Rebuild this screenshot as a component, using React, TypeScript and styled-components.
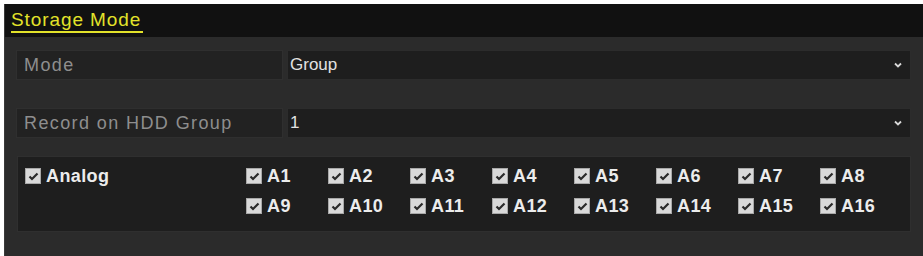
import React from "react";
import styled, { createGlobalStyle } from "styled-components";

const Global = createGlobalStyle`
  html, body { margin: 0; padding: 0; background: #ffffff; }
  #root { padding: 4px 0 0 4px; }
`;

const Window = styled.div`
  width: 919px;
  height: 252px;
  background: #2b2b2b;
  box-sizing: border-box;
  display: flex;
  flex-direction: column;
  overflow: hidden;
  font-family: "Liberation Sans", Arial, sans-serif;
  border-left: 1px solid #3a3a3a;
`;

const Header = styled.div`
  height: 33px;
  background: #111111;
  display: flex;
  align-items: flex-start;
  padding: 0 0 0 6px;
  box-sizing: border-box;
`;

const Title = styled.div`
  color: #e3e32a;
  font-size: 19px;
  line-height: 22px;
  padding-top: 5px;
  padding-right: 2px;
  letter-spacing: 0.9px;
  border-bottom: 2px solid #e3e32a;
`;

const Body = styled.div`
  padding: 13px 12px 0 11px;
  display: flex;
  flex-direction: column;
`;

const Row = styled.div<{ $mt?: number }>`
  display: flex;
  gap: 4px;
  height: 30px;
  margin-top: ${(p) => p.$mt ?? 0}px;
`;

const LabelCell = styled.div`
  width: 267px;
  background: #222222;
  border: 1px solid #2f2f2f;
  box-sizing: border-box;
  color: #8e8e8e;
  font-size: 18px;
  letter-spacing: 1.4px;
  display: flex;
  align-items: center;
  padding-left: 7px;
`;

const ValueCell = styled.div`
  flex: 1;
  background: #1e1e1e;
  border: 1px solid #2c2c2c;
  box-sizing: border-box;
  color: #e2e2e2;
  font-size: 17px;
  display: flex;
  align-items: center;
  justify-content: space-between;
  padding: 0 8px 0 2px;
`;

const Chevron = () => (
  <svg width="8" height="6" viewBox="0 0 8 6">
    <path d="M1 1.5 L4 4.5 L7 1.5" stroke="#d8d8d8" strokeWidth="1.8" fill="none" />
  </svg>
);

const GroupBox = styled.div`
  margin-top: 18px;
  margin-left: 1px;
  height: 76px;
  background: #1e1e1e;
  border: 1px solid #2f2f2f;
  box-sizing: border-box;
  display: flex;
  align-items: flex-start;
  padding: 11px 0 0 7px;
`;

const AnalogCol = styled.div`
  width: 221px;
`;

const ChannelGrid = styled.div`
  display: grid;
  grid-template-columns: repeat(8, 82px);
  grid-auto-rows: 16px;
  row-gap: 14px;
`;

const Check = styled.label`
  display: flex;
  align-items: center;
  gap: 5px;
  color: #ececec;
  font-size: 18px;
  line-height: 16px;
  font-weight: bold;
  height: 16px;
  letter-spacing: 0.4px;
`;

const Box = styled.span`
  width: 16px;
  height: 16px;
  box-sizing: border-box;
  background: #d9d9d9;
  border: 1px solid #a8a8a8;
  display: flex;
  align-items: center;
  justify-content: center;
  flex-shrink: 0;
`;

const CheckBox: React.FC<{ label: string }> = ({ label }) => (
  <Check>
    <Box>
      <svg width="11" height="9" viewBox="0 0 11 9">
        <path d="M1.5 4.5 L4 7 L9.5 1.5" stroke="#2a2a2a" strokeWidth="2.2" fill="none" />
      </svg>
    </Box>
    {label}
  </Check>
);

export default function App() {
  const channels = Array.from({ length: 16 }, (_, i) => `A${i + 1}`);
  return (
    <>
      <Global />
      <Window>
        <Header>
          <Title>Storage Mode</Title>
        </Header>
        <Body>
          <Row>
            <LabelCell>Mode</LabelCell>
            <ValueCell>
              <span>Group</span>
              <Chevron />
            </ValueCell>
          </Row>
          <Row $mt={28}>
            <LabelCell>Record on HDD Group</LabelCell>
            <ValueCell>
              <span>1</span>
              <Chevron />
            </ValueCell>
          </Row>
          <GroupBox>
            <AnalogCol>
              <CheckBox label="Analog" />
            </AnalogCol>
            <ChannelGrid>
              {channels.map((c) => (
                <CheckBox key={c} label={c} />
              ))}
            </ChannelGrid>
          </GroupBox>
        </Body>
      </Window>
    </>
  );
}
